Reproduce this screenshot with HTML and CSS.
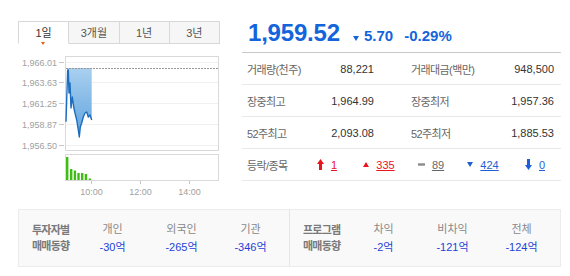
FILE: index.html
```html
<!DOCTYPE html>
<html lang="ko">
<head>
    <meta charset="UTF-8">
    <title>KOSPI</title>
    <link rel="stylesheet" href="styles.css">
</head>
<body>
    <div class="wrap">
        <div class="top">
            <div class="chart-col">
                <ul class="tabs">
                    <li class="tab active">1일</li>
                    <li class="tab">3개월</li>
                    <li class="tab">1년</li>
                    <li class="tab">3년</li>
                </ul>
                <svg class="chart" width="202" height="156" viewBox="0 0 202 156">
                    <defs>
                        <linearGradient id="area" x1="0" y1="0" x2="0" y2="1">
                            <stop offset="0" stop-color="#a9d0f0"/>
                            <stop offset="1" stop-color="#5fa3dc"/>
                        </linearGradient>
                    </defs>
                    <!-- price box -->
                    <rect x="47.5" y="12.5" width="153" height="94" fill="#fff" stroke="#d9d9d9"/>
                    <g stroke="#f0f0f0">
                        <line x1="48" y1="18.5" x2="200" y2="18.5"/>
                        <line x1="48" y1="38.5" x2="200" y2="38.5"/>
                        <line x1="48" y1="59.5" x2="200" y2="59.5"/>
                        <line x1="48" y1="80.5" x2="200" y2="80.5"/>
                        <line x1="48" y1="101.5" x2="200" y2="101.5"/>
                    </g>
                    <g stroke="#c8c8c8">
                        <line x1="41" y1="18.5" x2="46" y2="18.5"/>
                        <line x1="41" y1="38.5" x2="46" y2="38.5"/>
                        <line x1="41" y1="59.5" x2="46" y2="59.5"/>
                        <line x1="41" y1="80.5" x2="46" y2="80.5"/>
                        <line x1="41" y1="101.5" x2="46" y2="101.5"/>
                    </g>
                    <g class="axis" text-anchor="end">
                        <text x="39" y="21.5">1,966.01</text>
                        <text x="39" y="41.5">1,963.63</text>
                        <text x="39" y="62.5">1,961.25</text>
                        <text x="39" y="83.5">1,958.87</text>
                        <text x="39" y="104.5">1,956.50</text>
                    </g>
                    <polygon fill="url(#area)" points="49.2,24 73.7,24 73.7,76 72,71 70.3,73 68.7,68 67,69 65.3,73 63.7,79 62.3,83 61.3,93 60.3,86 58.7,76 57,69 55.7,63 54.3,53 53,64 52,39 51,49 50.3,26"/>
                    <line x1="48" y1="24.5" x2="200" y2="24.5" stroke="#9a9a9a" stroke-dasharray="2,1"/>
                    <polyline fill="none" stroke="#1c6dbe" stroke-width="1.4" stroke-linejoin="round" points="48,77.7 49,46 49.7,26 50.3,26 51,49 52,39 53,64 54.3,53 55.7,63 57,69 58.7,76 60.3,86 61.3,93 62.3,83 63.7,79 65.3,73 67,69 68.7,68 70.3,73 72,71 73.7,76"/>
                    <!-- volume box -->
                    <rect x="47.5" y="110.5" width="153" height="26" fill="#fff" stroke="#d9d9d9"/>
                    <g fill="#3fbd14">
                        <rect x="48" y="113" width="2.4" height="23"/>
                        <rect x="52" y="125" width="2.4" height="11"/>
                        <rect x="55.7" y="126.5" width="2.4" height="9.5"/>
                        <rect x="59.3" y="129" width="2.4" height="7"/>
                        <rect x="63" y="129" width="2.4" height="7"/>
                        <rect x="66.7" y="130" width="2.4" height="6"/>
                        <rect x="70.7" y="134.5" width="2.4" height="1.5"/>
                    </g>
                    <g stroke="#c8c8c8">
                        <line x1="73.5" y1="137" x2="73.5" y2="140"/>
                        <line x1="122.5" y1="137" x2="122.5" y2="140"/>
                        <line x1="171.5" y1="137" x2="171.5" y2="140"/>
                    </g>
                    <g class="axis" text-anchor="middle">
                        <text x="73.5" y="151">10:00</text>
                        <text x="122.5" y="151">12:00</text>
                        <text x="171.5" y="151">14:00</text>
                    </g>
                </svg>
            </div>

            <div class="info-col">
                <div class="quote">
                    <span class="now">1,959.52</span>
                    <span class="change">
                        <svg width="6" height="5" viewBox="0 0 6 5"><path d="M0 0H6L3 5Z" fill="#1464dc"/></svg>
                        5.70
                    </span>
                    <span class="rate">-0.29%</span>
                </div>
                <div class="stat-row">
                    <span class="lbl">거래량(천주)</span>
                    <span class="val">88,221</span>
                    <span class="lbl2">거래대금(백만)</span>
                    <span class="val2">948,500</span>
                </div>
                <div class="stat-row">
                    <span class="lbl">장중최고</span>
                    <span class="val">1,964.99</span>
                    <span class="lbl2">장중최저</span>
                    <span class="val2">1,957.36</span>
                </div>
                <div class="stat-row">
                    <span class="lbl">52주최고</span>
                    <span class="val">2,093.08</span>
                    <span class="lbl2">52주최저</span>
                    <span class="val2">1,885.53</span>
                </div>
                <div class="stat-row breadth">
                    <span class="lbl">등락/종목</span>
                    <span class="cnt">
                        <svg width="7" height="11" viewBox="0 0 7 11"><path d="M3.5 0L7 5H5V11H2V5H0Z" fill="#e8141e"/></svg>
                        <a class="up">1</a>
                    </span>
                    <span class="cnt">
                        <svg width="6" height="5" viewBox="0 0 6 5"><path d="M3 0L6 5H0Z" fill="#e8141e"/></svg>
                        <a class="up">335</a>
                    </span>
                    <span class="cnt">
                        <svg width="7" height="3" viewBox="0 0 7 3"><rect width="7" height="2.4" y="0.3" fill="#8a8a8a"/></svg>
                        <a class="same">89</a>
                    </span>
                    <span class="cnt">
                        <svg width="6" height="5" viewBox="0 0 6 5"><path d="M0 0H6L3 5Z" fill="#1d5fd6"/></svg>
                        <a class="down">424</a>
                    </span>
                    <span class="cnt">
                        <svg width="7" height="11" viewBox="0 0 7 11"><path d="M3.5 11L7 6H5V0H2V6H0Z" fill="#1d5fd6"/></svg>
                        <a class="down">0</a>
                    </span>
                </div>
            </div>
        </div>

        <div class="flow">
            <div class="flow-group">
                <div class="flow-title">투자자별<br>매매동향</div>
                <div class="flow-item"><span class="who">개인</span><span class="amt">-30억</span></div>
                <div class="flow-item"><span class="who">외국인</span><span class="amt">-265억</span></div>
                <div class="flow-item"><span class="who">기관</span><span class="amt">-346억</span></div>
            </div>
            <div class="flow-group">
                <div class="flow-title">프로그램<br>매매동향</div>
                <div class="flow-item"><span class="who">차익</span><span class="amt">-2억</span></div>
                <div class="flow-item"><span class="who">비차익</span><span class="amt">-121억</span></div>
                <div class="flow-item"><span class="who">전체</span><span class="amt">-124억</span></div>
            </div>
        </div>
    </div>
</body>
</html>
```

FILE: styles.css
```css
body {
    margin: 0;
    background: #fff;
    font-family: "Liberation Sans", "Noto Sans CJK KR", sans-serif;
    font-size: 11px;
    color: #333;
}
.wrap {
    width: 570px;
    padding: 21px 9px 0 18px;
    box-sizing: border-box;
}
.top {
    display: flex;
    height: 188px;
}
.chart-col {
    width: 202px;
}
.tabs {
    display: flex;
    margin: 0;
    padding: 0;
    list-style: none;
    height: 23px;
}
.tab {
    flex: 1;
    position: relative;
    text-align: center;
    line-height: 22px;
    font-size: 11px;
    color: #555;
    background: #f6f6f6;
    border: 1px solid #d8d8d8;
    border-left: none;
}
.tab.active {
    background: #fff;
    border-left: 1px solid #d8d8d8;
    border-bottom-color: #fff;
    color: #333;
}
.tab.active::after {
    content: "";
    position: absolute;
    left: 22px;
    top: 20px;
    border-left: 2.5px solid transparent;
    border-right: 2.5px solid transparent;
    border-top: 3px solid #f05a1e;
}
.chart {
    display: block;
}
.axis {
    font-family: "Liberation Sans", sans-serif;
    font-size: 9px;
    fill: #a0a0a0;
}
.info-col {
    width: 319px;
    margin-left: 22px;
    margin-top: -21px;
}
.quote {
    height: 53px;
    box-sizing: border-box;
    padding: 19px 0 0 6px;
    border-bottom: 1px solid #c9c9c9;
    display: flex;
    align-items: baseline;
    color: #1464dc;
    font-weight: bold;
}
.now {
    font-size: 24px;
    line-height: 28px;
    letter-spacing: -0.2px;
}
.change {
    font-size: 15px;
    margin-left: 13px;
}
.change svg {
    margin-right: 1px;
}
.rate {
    font-size: 15px;
    margin-left: 11px;
}
.stat-row {
    display: flex;
    align-items: center;
    height: 31px;
    border-bottom: 1px solid #e8e8e8;
}
.lbl {
    width: 65px;
    padding-left: 5px;
    color: #666;
    letter-spacing: -0.6px;
}
.val {
    width: 62px;
    text-align: right;
}
.lbl2 {
    flex: 1;
    padding-left: 37px;
    color: #666;
    letter-spacing: -0.6px;
}
.val2 {
    padding-right: 7px;
    text-align: right;
}
.breadth .lbl {
    width: 54px;
}
.cnt {
    flex: 1;
    display: flex;
    align-items: center;
    justify-content: center;
}
.cnt svg {
    margin-right: 7px;
}
.cnt a {
    text-decoration: underline;
}
.up {
    color: #e8141e;
}
.same {
    color: #666;
}
.down {
    color: #1d5fd6;
}
.flow {
    display: flex;
    height: 56px;
    border: 1px solid #ececec;
    background: #f9f9f9;
}
.flow-group {
    flex: 1;
    display: flex;
    align-items: center;
    padding-left: 13px;
}
.flow-group + .flow-group {
    border-left: 1px solid #e6e6e6;
}
.flow-title {
    width: 46px;
    font-weight: bold;
    color: #7a7a7a;
    line-height: 16px;
    letter-spacing: -0.8px;
}
.flow-item {
    width: 69px;
    display: flex;
    flex-direction: column;
    align-items: center;
    line-height: 18px;
}
.who {
    color: #888;
    font-size: 11px;
}
.amt {
    color: #1e3fd8;
    font-size: 11px;
}
```
